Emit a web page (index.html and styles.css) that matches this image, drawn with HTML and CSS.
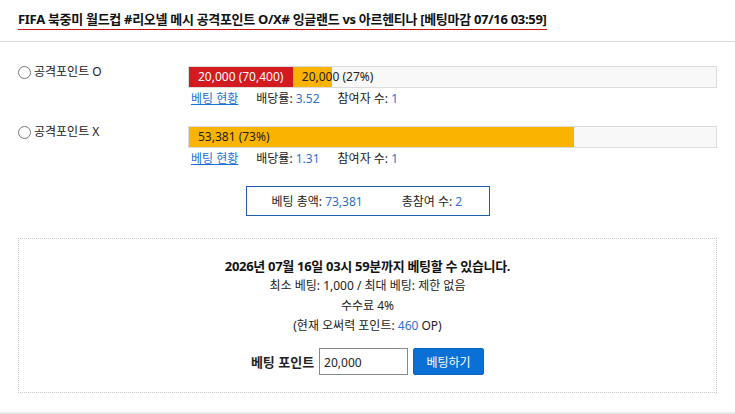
FILE: index.html
```html
<!DOCTYPE html>
<html lang="ko">
<head>
    <meta charset="UTF-8">
    <meta name="viewport" content="width=device-width, initial-scale=1.0">
    <title>베팅</title>
    <link rel="stylesheet" href="styles.css">
</head>
<body>

<!-- Header -->
<div class="bet-header">
    <h1 class="bet-title">FIFA 북중미 월드컵 #리오넬 메시 공격포인트 O/X# 잉글랜드 vs 아르헨티나 [베팅마감 07/16 03:59]</h1>
</div>

<div class="bet-body">
    <!-- Option O -->
    <div class="bet-option">
        <label class="option-label"><span class="radio"></span>공격포인트 O</label>
        <div class="option-main">
            <div class="bar">
                <div class="bar-seg seg-red" style="width: 19.7%">20,000 (70,400)</div>
                <div class="bar-seg seg-orange" style="width: 7.4%">20,000 (27%)</div>
            </div>
            <div class="option-info">
                <a href="#" class="status-link">베팅 현황</a>
                <span>배당률: <b class="num">3.52</b></span>
                <span>참여자 수: <b class="num">1</b></span>
            </div>
        </div>
    </div>

    <!-- Option X -->
    <div class="bet-option">
        <label class="option-label"><span class="radio"></span>공격포인트 X</label>
        <div class="option-main">
            <div class="bar">
                <div class="bar-seg seg-orange" style="width: 73%">53,381 (73%)</div>
            </div>
            <div class="option-info">
                <a href="#" class="status-link">베팅 현황</a>
                <span>배당률: <b class="num">1.31</b></span>
                <span>참여자 수: <b class="num">1</b></span>
            </div>
        </div>
    </div>

    <!-- Totals -->
    <div class="summary-wrap">
        <div class="summary">
            <span>베팅 총액: <b class="num">73,381</b></span>
            <span>총참여 수: <b class="num">2</b></span>
        </div>
    </div>

    <!-- Bet form -->
    <div class="bet-form">
        <p class="deadline">2026년 07월 16일 03시 59분까지 베팅할 수 있습니다.</p>
        <p>최소 베팅: 1,000 / 최대 베팅: 제한 없음</p>
        <p>수수료 4%</p>
        <p>(현재 오써력 포인트: <b class="num">460</b> OP)</p>
        <div class="form-row">
            <span class="form-label">베팅 포인트</span>
            <input type="text" class="point-input" value="20,000">
            <button class="bet-btn">베팅하기</button>
        </div>
    </div>
</div>

<div class="page-footer"></div>

</body>
</html>
```

FILE: styles.css
```css
/* General */
body {
    margin: 0;
    font-family: "Noto Sans", "Noto Sans CJK KR", sans-serif;
    font-size: 12px;
    color: #222;
    background: #fff;
}

p {
    margin: 0;
}

.num {
    font-weight: normal;
    color: #2f6fd0;
}

/* Header */
.bet-header {
    padding: 10px 18px 11px;
    border-bottom: 1px solid #dcdcdc;
}

.bet-title {
    display: inline-block;
    margin: 0;
    font-size: 13px;
    line-height: 19px;
    font-weight: bold;
    letter-spacing: -0.3px;
    color: #111;
    border-bottom: 1px solid #c8151b;
}

/* Options */
.bet-body {
    padding: 24px 18px 0;
}

.bet-option {
    display: flex;
    margin-bottom: 18px;
}

.option-label {
    width: 170px;
    flex-shrink: 0;
    display: flex;
    align-items: center;
    gap: 3px;
    height: 12px;
    line-height: 12px;
}

.radio {
    width: 11px;
    height: 11px;
    border: 1px solid #777;
    border-radius: 50%;
    background: #fff;
}

.option-main {
    width: 529px;
}

.bar {
    display: flex;
    height: 20px;
    border: 1px solid #dcdcdc;
    background: #f8f8f8;
}

.bar-seg {
    flex-shrink: 0;
    box-sizing: border-box;
    padding-left: 9px;
    line-height: 20px;
    white-space: nowrap;
    overflow: visible;
}

.seg-red {
    background: #d21a1f;
    color: #fff;
}

.seg-orange {
    background: #fab400;
    color: #222;
}

.option-info {
    display: flex;
    gap: 18px;
    padding: 2px 3px 0;
    line-height: 18px;
}

.status-link {
    color: #1a6fd8;
    text-decoration: underline;
}

/* Totals */
.summary-wrap {
    display: flex;
    justify-content: center;
    margin-top: 2px;
}

.summary {
    display: flex;
    gap: 39px;
    width: 244px;
    box-sizing: border-box;
    height: 30px;
    align-items: center;
    padding-left: 25px;
    border: 1px solid #1f5fae;
}

/* Bet form */
.bet-form {
    margin-top: 22px;
    padding: 17px 0 17px;
    border: 1px dotted #c8c8c8;
    text-align: center;
}

.bet-form p {
    line-height: 20px;
}

.deadline {
    font-size: 13px;
    font-weight: bold;
    letter-spacing: -0.3px;
    color: #111;
}

.form-row {
    display: flex;
    justify-content: center;
    align-items: center;
    gap: 5px;
    margin-top: 12px;
}

.form-label {
    font-weight: bold;
    font-size: 13px;
}

.point-input {
    width: 89px;
    height: 27px;
    box-sizing: border-box;
    padding: 2px 4px 0;
    border: 1px solid #888;
    font-family: inherit;
    font-size: 12px;
    color: #222;
}

.bet-btn {
    width: 71px;
    height: 27px;
    border: 1px solid #0a64c4;
    border-radius: 2px;
    background: #0b70d6;
    color: #fff;
    font-family: inherit;
    font-size: 12px;
}

.page-footer {
    margin-top: 19px;
    height: 10px;
    background: #e9e9e9;
}
```
